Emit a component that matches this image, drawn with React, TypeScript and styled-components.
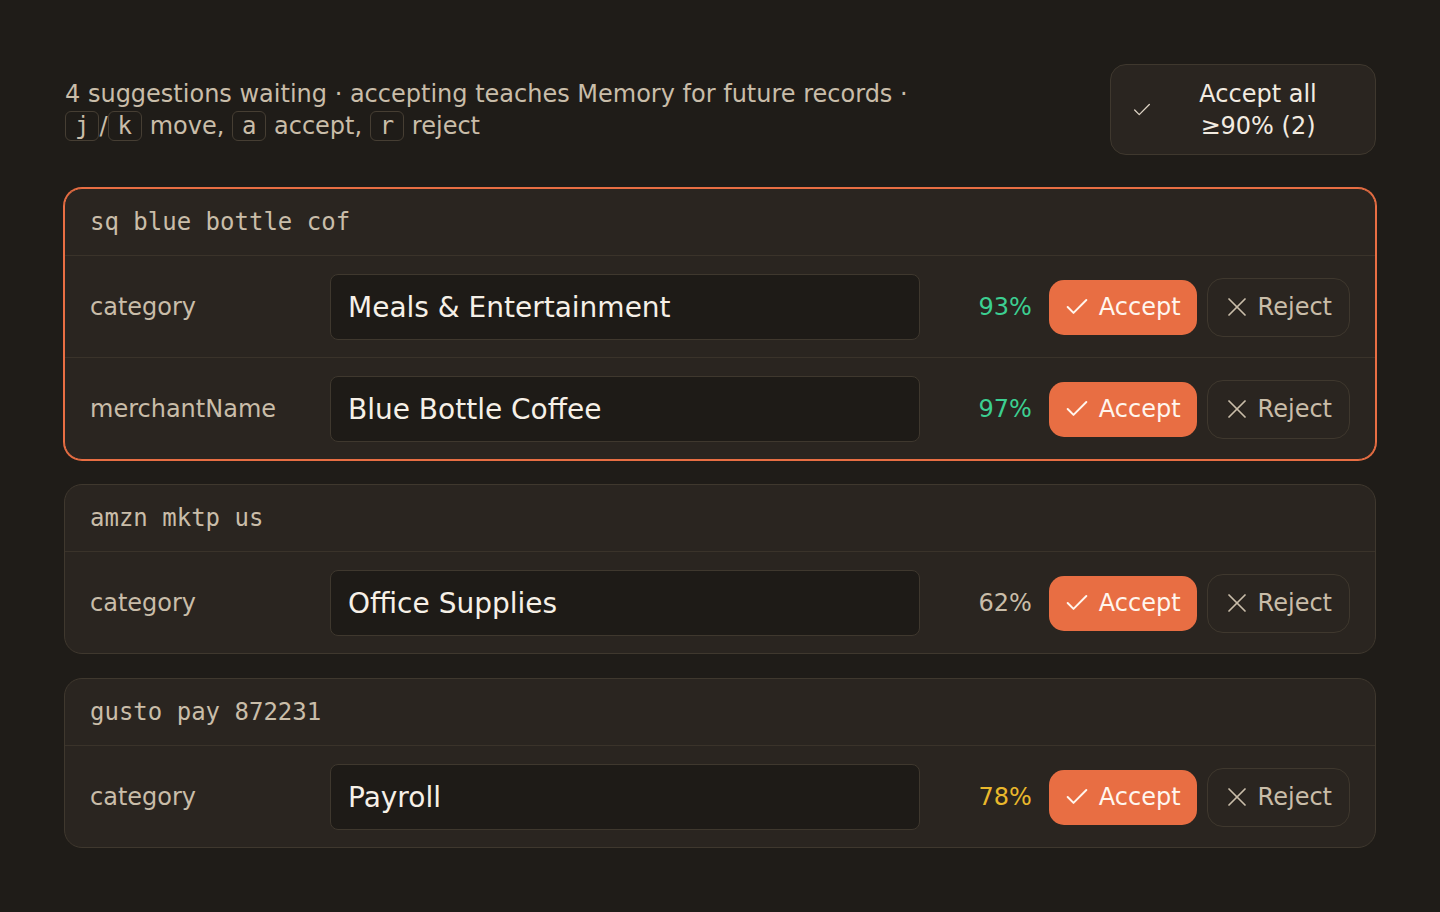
import React from 'react'
import styled, { createGlobalStyle, css } from 'styled-components'
import { Check, X } from 'lucide-react'

const GlobalStyle = createGlobalStyle`
  html, body {
    margin: 0;
    background: #1f1c18;
  }
  body {
    font-family: 'DejaVu Sans', 'Noto Sans', sans-serif;
    color: #c9bda9;
  }
  * {
    box-sizing: border-box;
  }
`

const Page = styled.div`
  min-height: 100vh;
  padding: 64px;
  display: flex;
  flex-direction: column;
  gap: 33px;
`

const TopBar = styled.div`
  display: flex;
  align-items: center;
  justify-content: space-between;
  gap: 32px;
`

const Hint = styled.div`
  font-size: 24px;
  line-height: 32px;
  color: #c9bda9;
  padding-left: 1px;
`

const Kbd = styled.kbd`
  display: inline-block;
  font-family: 'DejaVu Sans Mono', 'Liberation Mono', monospace;
  font-size: 24px;
  line-height: 28px;
  padding: 0 9px;
  border: 1px solid #463e33;
  border-radius: 6px;
  color: #c9bda9;
  background: #1f1c18;
`

const AcceptAllButton = styled.button`
  width: 266px;
  height: 91px;
  display: flex;
  align-items: center;
  padding: 0 20px;
  gap: 8px;
  background: #2a2520;
  border: 1.5px solid #3f382e;
  border-radius: 16px;
  color: #f2ebe0;
  font-family: inherit;
  font-size: 24px;
  line-height: 32px;
  cursor: pointer;

  svg {
    flex: none;
    width: 22px;
    height: 22px;
    color: #ddd3c4;
  }
`

const AcceptAllLabel = styled.span`
  flex: 1;
  text-align: center;
`

const CardList = styled.div`
  display: flex;
  flex-direction: column;
  gap: 24px;
`

const Card = styled.section<{ $active?: boolean }>`
  background: #2a2520;
  border: 1.5px solid #3f382e;
  border-radius: 18px;
  overflow: hidden;

  ${p =>
    p.$active &&
    css`
      border-color: #e86e43;
      box-shadow: 0 0 0 1px #e86e43;
    `}
`

const CardHeader = styled.div`
  padding: 20px 25px;
  font-family: 'DejaVu Sans Mono', 'Liberation Mono', monospace;
  font-size: 24px;
  line-height: 26px;
  color: #c9bda9;
  border-bottom: 1px solid #3a332a;
`

const FieldRow = styled.div`
  display: flex;
  align-items: center;
  padding: 18px 25px 17px;

  & + & {
    border-top: 1px solid #3a332a;
  }
`

const FieldLabel = styled.div`
  width: 240px;
  flex: none;
  font-size: 24px;
  color: #c9bda9;
`

const ValueBox = styled.div`
  flex: 1;
  height: 66px;
  display: flex;
  align-items: center;
  padding: 0 17px;
  background: #1e1b17;
  border: 1px solid #3f382e;
  border-radius: 8px;
  font-size: 28px;
  color: #f6f0e7;
`

const Confidence = styled.div<{ $tone: 'high' | 'mid' | 'low' }>`
  width: 112px;
  flex: none;
  text-align: right;
  font-size: 24px;
  color: ${p => (p.$tone === 'high' ? '#3ccf91' : p.$tone === 'mid' ? '#e9b82c' : '#c9bda9')};
`

const Actions = styled.div`
  display: flex;
  align-items: center;
  gap: 10px;
  margin-left: 17px;
`

const AcceptButton = styled.button`
  height: 55px;
  display: flex;
  align-items: center;
  gap: 8px;
  padding: 0 16px 0 14px;
  background: #e86e43;
  border: none;
  border-radius: 15px;
  color: #fff6ee;
  font-family: inherit;
  font-size: 24px;
  cursor: pointer;

  svg {
    width: 28px;
    height: 28px;
  }
`

const RejectButton = styled.button`
  height: 59px;
  display: flex;
  align-items: center;
  gap: 5px;
  padding: 0 17px 0 13px;
  background: transparent;
  border: 1.5px solid #3f382e;
  border-radius: 16px;
  color: #c9bda9;
  font-family: inherit;
  font-size: 24px;
  cursor: pointer;

  svg {
    width: 32px;
    height: 32px;
  }
`

type Suggestion = {
  field: string
  value: string
  confidence: number
}

type Record = {
  raw: string
  suggestions: Suggestion[]
}

const records: Record[] = [
  {
    raw: 'sq blue bottle cof',
    suggestions: [
      { field: 'category', value: 'Meals & Entertainment', confidence: 93 },
      { field: 'merchantName', value: 'Blue Bottle Coffee', confidence: 97 },
    ],
  },
  {
    raw: 'amzn mktp us',
    suggestions: [{ field: 'category', value: 'Office Supplies', confidence: 62 }],
  },
  {
    raw: 'gusto pay 872231',
    suggestions: [{ field: 'category', value: 'Payroll', confidence: 78 }],
  },
]

const toneFor = (c: number) => (c >= 90 ? 'high' : c >= 70 ? 'mid' : 'low')

export default function App() {
  const total = records.reduce((n, r) => n + r.suggestions.length, 0)
  const confident = records.reduce(
    (n, r) => n + r.suggestions.filter(s => s.confidence >= 90).length,
    0
  )

  return (
    <>
      <GlobalStyle />
      <Page>
        <TopBar>
          <Hint>
            {total} suggestions waiting · accepting teaches Memory for future records ·
            <br />
            <Kbd>j</Kbd>/<Kbd>k</Kbd> move, <Kbd>a</Kbd> accept, <Kbd>r</Kbd> reject
          </Hint>
          <AcceptAllButton>
            <Check strokeWidth={1.4} />
            <AcceptAllLabel>
              Accept all
              <br />≥90% ({confident})
            </AcceptAllLabel>
          </AcceptAllButton>
        </TopBar>

        <CardList>
          {records.map((rec, i) => (
            <Card key={rec.raw} $active={i === 0}>
              <CardHeader>{rec.raw}</CardHeader>
              {rec.suggestions.map(s => (
                <FieldRow key={s.field}>
                  <FieldLabel>{s.field}</FieldLabel>
                  <ValueBox>{s.value}</ValueBox>
                  <Confidence $tone={toneFor(s.confidence)}>{s.confidence}%</Confidence>
                  <Actions>
                    <AcceptButton>
                      <Check strokeWidth={1.7} />
                      Accept
                    </AcceptButton>
                    <RejectButton>
                      <X strokeWidth={1.3} />
                      Reject
                    </RejectButton>
                  </Actions>
                </FieldRow>
              ))}
            </Card>
          ))}
        </CardList>
      </Page>
    </>
  )
}
